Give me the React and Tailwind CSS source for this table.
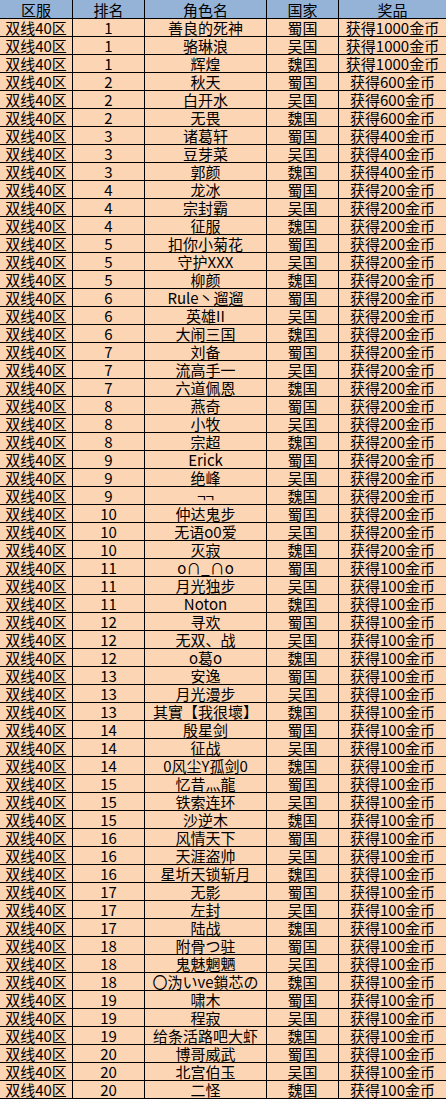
const rows = [
  ["善良的死神", 1, "蜀国", 1000],
  ["骆琳浪", 1, "吴国", 1000],
  ["辉煌", 1, "魏国", 1000],
  ["秋天", 2, "蜀国", 600],
  ["白开水", 2, "吴国", 600],
  ["无畏", 2, "魏国", 600],
  ["诸葛轩", 3, "蜀国", 400],
  ["豆芽菜", 3, "吴国", 400],
  ["郭颜", 3, "魏国", 400],
  ["龙冰", 4, "蜀国", 200],
  ["宗封霸", 4, "吴国", 200],
  ["征服", 4, "魏国", 200],
  ["扣你小菊花", 5, "蜀国", 200],
  ["守护XXX", 5, "吴国", 200],
  ["柳颜", 5, "魏国", 200],
  ["Rule丶遛遛", 6, "蜀国", 200],
  ["英雄II", 6, "吴国", 200],
  ["大闹三国", 6, "魏国", 200],
  ["刘备", 7, "蜀国", 200],
  ["流高手一", 7, "吴国", 200],
  ["六道佩恩", 7, "魏国", 200],
  ["燕奇", 8, "蜀国", 200],
  ["小牧", 8, "吴国", 200],
  ["宗超", 8, "魏国", 200],
  ["Erick", 9, "蜀国", 200],
  ["绝峰", 9, "吴国", 200],
  ["¬¬", 9, "魏国", 200],
  ["仲达鬼步", 10, "蜀国", 200],
  ["无语o0爱", 10, "吴国", 200],
  ["灭寂", 10, "魏国", 200],
  ["o∩_∩o", 11, "蜀国", 100],
  ["月光独步", 11, "吴国", 100],
  ["Noton", 11, "魏国", 100],
  ["寻欢", 12, "蜀国", 100],
  ["无双、战", 12, "吴国", 100],
  ["o葛o", 12, "魏国", 100],
  ["安逸", 13, "蜀国", 100],
  ["月光漫步", 13, "吴国", 100],
  ["其實【我很壞】", 13, "魏国", 100],
  ["殷星剑", 14, "蜀国", 100],
  ["征战", 14, "吴国", 100],
  ["0风尘Y孤剑0", 14, "魏国", 100],
  ["忆昔灬龍", 15, "蜀国", 100],
  ["铁索连环", 15, "吴国", 100],
  ["沙逆木", 15, "魏国", 100],
  ["风情天下", 16, "蜀国", 100],
  ["天涯盗帅", 16, "吴国", 100],
  ["星圻天锁斩月", 16, "魏国", 100],
  ["无影", 17, "蜀国", 100],
  ["左封", 17, "吴国", 100],
  ["陆战", 17, "魏国", 100],
  ["附骨つ驻", 18, "蜀国", 100],
  ["鬼魅魍魉", 18, "吴国", 100],
  ["〇沩いve鎖芯の", 18, "魏国", 100],
  ["啸木", 19, "蜀国", 100],
  ["程寂", 19, "吴国", 100],
  ["给条活路吧大虾", 19, "魏国", 100],
  ["博哥威武", 20, "蜀国", 100],
  ["北宫伯玉", 20, "吴国", 100],
  ["二怪", 20, "魏国", 100],
];

const headers = ["区服", "排名", "角色名", "国家", "奖品"];

function Cell({ children, last, header }) {
  return (
    <div
      className={`flex items-center justify-center whitespace-nowrap border-b border-black text-[15px] leading-[17px] text-black ${
        last ? "" : "border-r"
      } ${header ? "h-[19px] bg-[#95b3d7]" : "h-[18px] bg-[#fcd5b4]"}`}
    >
      {children}
    </div>
  );
}

export default function App() {
  return (
    <div
      className="grid w-[446px] grid-cols-[73px_72px_122px_72px_107px]"
      style={{ fontFamily: '"Noto Sans CJK SC", sans-serif' }}
    >
      {headers.map((h, i) => (
        <Cell key={h} header last={i === 4}>
          {h}
        </Cell>
      ))}
      {rows.map(([name, rank, country, gold], idx) => (
        <div key={idx} className="contents">
          <Cell>双线40区</Cell>
          <Cell>{rank}</Cell>
          <Cell>{name}</Cell>
          <Cell>{country}</Cell>
          <Cell last>获得{gold}金币</Cell>
        </div>
      ))}
    </div>
  );
}
